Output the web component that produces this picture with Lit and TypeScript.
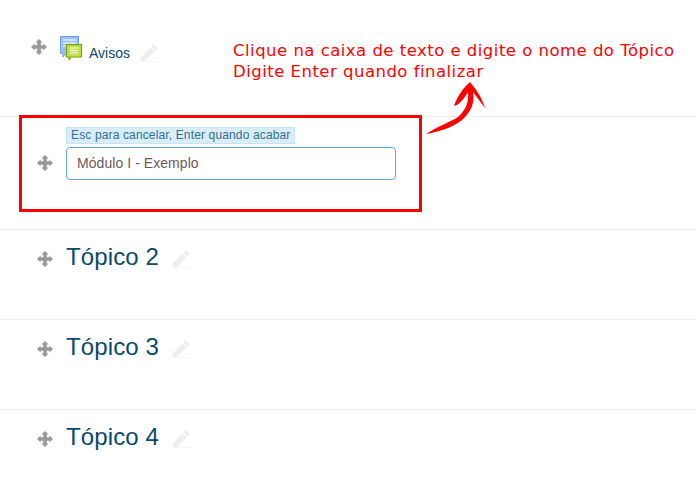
import { LitElement, html, css, svg } from "lit";
import { customElement } from "lit/decorators.js";

const move = svg`<svg class="move" viewBox="0 0 16 16" width="16" height="16"><path fill="#999" d="M8 0l3.600 3.600H9.800v2.600h2.600V4.400L16 8l-3.600 3.600V9.800H9.800v2.600h1.800L8 16l-3.600-3.600h1.800V9.800H3.600v1.800L0 8l3.600-3.600v1.800h2.600V3.600H4.400z"/></svg>`;
const pencil = svg`<svg class="pen" viewBox="0 0 18 18" width="18" height="18"><path fill="#eee" d="M1 13L10.500 3.500 14.500 7.500 5 17H1zM11.500 2.500l1.500-1.500q1-1 2 0l2 2q1 1 0 2L15.500 6.500z"/><path fill="#f4f4f4" d="M0 17h18v1H0z"/></svg>`;
const forum = svg`<svg viewBox="0 0 24 24" width="24" height="24" class="forum">
  <path fill="#9cc0f4" stroke="#6f9fe6" d="M1.500.5h18v17H7l-3 3.500v-3.500H1.500z"/>
  <path fill="none" stroke="#fff" d="M4 4h13M4 7h13M4 10h9"/>
  <path fill="#c4e04a" stroke="#7aa512" stroke-width="1.200" d="M7.500 8.600h15v12.400H12l-2 3v-3H7.500z"/>
  <path fill="none" stroke="#fff" d="M11 12h8M11 14.500h8M11 17h8"/>
</svg>`;

@customElement("app-root")
export class AppRoot extends LitElement {
  static styles = css`
    :host { display: block; width: 696px; height: 498px; position: relative; overflow: hidden; background: #fff; font-family: "Liberation Sans", Arial, sans-serif; }
    .row { border-bottom: 1px solid #eee; box-sizing: border-box; display: flex; }
    .first { height: 117px; padding: 36px 0 0 31px; gap: 12px; }
    .first .move { margin-top: 3px; }
    .forum { display: block; }
    .title { display: flex; align-items: center; gap: 10px; height: 24px; margin-top: 5px; margin-left: -6px; }
    .avisos { font-size: 14px; color: #0a4a6a; }
    .editing { height: 113px; padding: 10px 0 0 37px; gap: 13px; }
    .editing .move { margin-top: 28px; }
    .tip { display: block; width: fit-content; background: #d9edf7; border: 1px solid #c9e4f0; color: #31708f; font-size: 12px; letter-spacing: 0.14px; line-height: 15px; padding: 0 4px; height: 17px; box-sizing: border-box; margin-bottom: 3px; }
    .input { width: 330px; height: 33px; box-sizing: border-box; border: 1px solid #66a3dd; border-radius: 4px; padding: 0 10px; line-height: 31px; font-size: 14px; letter-spacing: 0.06px; color: #6d5a55; }
    .topic { height: 90px; padding: 11px 0 0 37px; gap: 13px; }
    .topic .move { margin-top: 10px; }
    .last { border-bottom: none; }
    .heading { display: flex; align-items: center; gap: 13px; height: 32px; font-size: 24px; letter-spacing: 0.12px; color: #0a4a6a; }
    .heading .pen { margin-top: 3px; }
    .box { position: absolute; left: 19px; top: 115px; width: 403px; height: 97px; box-sizing: border-box; border: 3px solid #f00; }
    .note { position: absolute; left: 233px; top: 40px; font-family: "DejaVu Sans", Verdana, sans-serif; font-size: 16.500px; letter-spacing: 0.48px; line-height: 21px; color: #f00; white-space: nowrap; }
    .arrow { position: absolute; left: 420px; top: 75px; }
  `;

  render() {
    return html`
      <div class="row first">
        ${move}${forum}
        <div class="title"><span class="avisos">Avisos</span>${pencil}</div>
      </div>
      <div class="row editing">
        ${move}
        <div>
          <span class="tip">Esc para cancelar, Enter quando acabar</span>
          <div class="input">Módulo I - Exemplo</div>
        </div>
      </div>
      ${["Tópico 2", "Tópico 3", "Tópico 4"].map(
        (t, i) => html`<div class="row topic ${i === 2 ? "last" : ""}">${move}
          <div class="heading">${t}${pencil}</div></div>`
      )}
      <div class="box"></div>
      <div class="note">Clique na caixa de texto e digite o nome do Tópico<br />Digite Enter quando finalizar</div>
      <svg class="arrow" width="70" height="65" viewBox="0 0 70 65">
        <path fill="#f00" d="M6 59C17 52 30 47 38 42C45 36 49 28 48 17C44 24 39 30 34 31C37 22 43 13 50 7C55 13 62 22 65 33C61 28 57 22 53 17C55 28 51 37 42 45C32 53 18 57 6 59Z"/>
      </svg>
    `;
  }
}
